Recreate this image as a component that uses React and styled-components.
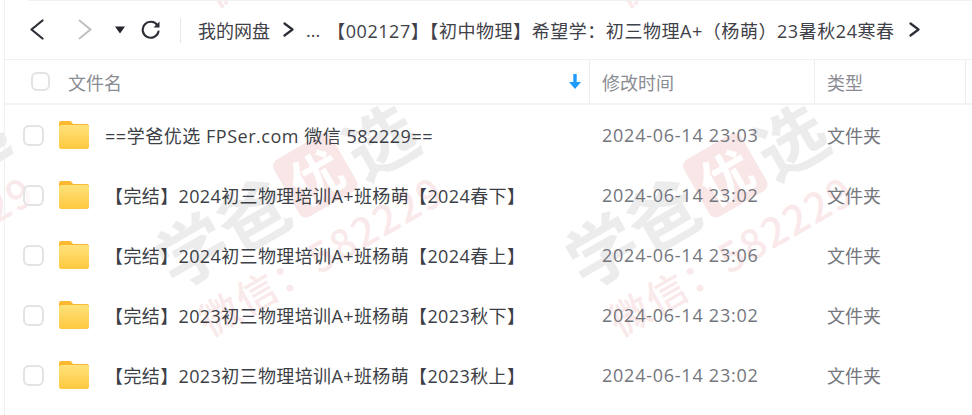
import React from "react";
import styled, { createGlobalStyle } from "styled-components";

const Global = createGlobalStyle`
  html, body { margin: 0; padding: 0; background: #fff; }
  body { font-family: "Open Sans", "Noto Sans CJK SC", sans-serif; overflow: hidden; }
`;
const Page = styled.div`
  position: relative; width: 972px; height: 415px; overflow: hidden; background: #fff;
`;
const Watermarks = styled.div`
  position: absolute; inset: 0; pointer-events: none; font-family: "Noto Sans CJK SC", sans-serif;
`;
const Mark = styled.div`
  position: absolute; width: 340px; height: 134px; margin: -67px 0 0 -170px;
  display: flex; flex-direction: column; align-items: center; justify-content: space-between;
  transform: rotate(-30deg);
`;
const MarkTitle = styled.div`
  display: flex; align-items: center; gap: 6px; height: 78px;
  font-size: 70px; line-height: 78px; font-weight: 700; color: #ececec;
`;
const Stamp = styled.span`
  display: inline-flex; align-items: center; justify-content: center;
  width: 66px; height: 66px; border-radius: 8px; background: #f9e6e7;
  color: #fff; font-size: 52px; line-height: 66px;
`;
const MarkContact = styled.div`
  font-size: 40px; line-height: 48px; height: 48px; font-weight: 500; letter-spacing: 2px;
  color: #fae9ea; white-space: nowrap;
`;
const Frame = styled.div`
  position: relative; height: 100%; margin-left: 4px; border-left: 1px solid #f0f0f0;
`;
const Toolbar = styled.div`
  display: flex; align-items: center; height: 60px; box-sizing: border-box; position: relative;
  border-bottom: 1px solid #f0f0f0; color: #3a3c44; font-size: 18px; white-space: nowrap;
`;
const TopRule = styled.div`
  position: absolute; top: 0; left: 24px; right: 0; height: 1px; background: #f0f0f0;
`;
const IconBtn = styled.span`
  display: flex; align-items: center; justify-content: center; flex: none;
  width: ${p => p.$w}px; margin-left: ${p => p.$ml || 0}px; height: 30px;
`;
const Divider = styled.span`
  flex: none; width: 1px; height: 25px; background: #e6e6e6; margin: 2px 17px 0 19px;
`;
const Crumb = styled.span`
  flex: none; margin-left: ${p => p.$ml || 0}px; color: #3f4148; letter-spacing: ${p => p.$ls || 0}px;
`;
const HeaderRow = styled.div`
  display: grid; grid-template-columns: 558px 225px 151px 1fr; height: 45px; box-sizing: border-box;
  padding-left: 26px; border-bottom: 2px solid #f3f3f3;
  color: #8a8c93; font-size: 18px;
`;
const HeaderName = styled.div`
  display: flex; align-items: center; position: relative;
`;
const HeaderCell = styled.div`
  display: flex; align-items: center; padding-left: 12px; border-left: 1px solid #eeeeee;
`;
const HeaderEnd = styled.div`
  border-left: 1px solid #eeeeee;
`;
const Check = styled.span`
  flex: none; box-sizing: border-box; display: block; width: ${p => p.$s}px; height: ${p => p.$s}px;
  border: 2px solid #e3e3e3; border-radius: 6px; background: rgba(255,255,255,.6);
`;
const HeaderLabel = styled.span`
  margin-left: 18px;
`;
const SortIcon = styled.span`
  display: flex; margin-left: auto; margin-right: 8px;
`;
const Row = styled.div`
  display: grid; grid-template-columns: 36px 46px 497px 225px 1fr; align-items: center; height: 60px;
  padding-left: 18px; font-size: 18px;
`;
const Name = styled.span`
  color: #3d3f46; white-space: nowrap; letter-spacing: ${p => p.$ls}px;
`;
const DateText = styled.span`
  color: #74767d; white-space: nowrap; letter-spacing: .75px;
`;
const TypeText = styled.span`
  color: #74767d;
`;

const Folder = () => (
  <svg width="30" height="28" viewBox="0 0 30 28">
    <defs>
      <linearGradient id="fg" x1="0" y1="0" x2="0" y2="1">
        <stop offset="0" stopColor="#ffe27a" />
        <stop offset="1" stopColor="#ffc840" />
      </linearGradient>
    </defs>
    <path d="M2 0h8c1.500 0 2.300.6 3.200 1.800L14 3h13.500A2.500 2.500 0 0 1 30 5.500V10H0V2a2 2 0 0 1 2-2z" fill="#fdb830" />
    <rect x="0" y="4" width="30" height="24" rx="2.500" fill="url(#fg)" />
  </svg>
);
const Chevron = ({ dir = "right", color = "#2b2e36", w = 14, h = 21, sw = 2.200 }) => (
  <svg width={w} height={h} viewBox={`0 0 ${w} ${h}`} fill="none" stroke={color} strokeWidth={sw} strokeLinecap="round" strokeLinejoin="round">
    {dir === "left"
      ? <path d={`M${w - 1.500} 1.500 L1.500 ${h / 2} L${w - 1.500} ${h - 1.500}`} />
      : <path d={`M1.500 1.500 L${w - 1.500} ${h / 2} L1.500 ${h - 1.500}`} />}
  </svg>
);
const Caret = () => (
  <svg width="10" height="8" viewBox="0 0 10 8"><path d="M0 .5h10L5 7.500z" fill="#24262d" /></svg>
);
const Refresh = () => (
  <svg width="20" height="20" viewBox="0 0 20 20" fill="none">
    <path d="M16.300 5.200A8 8 0 1 0 17.500 11.500" stroke="#2b2e36" strokeWidth="2.100" strokeLinecap="round" />
    <path d="M18.500 1.500v6h-6z" fill="#2b2e36" />
  </svg>
);
const SortArrow = () => (
  <svg width="12" height="15" viewBox="0 0 12 15"><path d="M4.300 0h3.400v8H12l-6 7-6-7h4.300z" fill="#1f9bfb" /></svg>
);

const rows = [
  ["==学爸优选 FPSer.com 微信 582229==", "2024-06-14 23:03", 0.53],
  ["【完结】2024初三物理培训A+班杨萌【2024春下】", "2024-06-14 23:02", 0.38],
  ["【完结】2024初三物理培训A+班杨萌【2024春上】", "2024-06-14 23:06", 0.38],
  ["【完结】2023初三物理培训A+班杨萌【2023秋下】", "2024-06-14 23:02", 0.38],
  ["【完结】2023初三物理培训A+班杨萌【2023秋上】", "2024-06-14 23:02", 0.38],
];
const marks = [
  [-111, 217], [299, 217], [709, 217],
  [304, -112], [714, -112],
  [304, 535], [714, 535],
];

export default function App() {
  return (
    <Page>
      <Global />
      <Watermarks>
        {marks.map(([x, y]) => (
          <Mark key={`${x}-${y}`} style={{ left: x, top: y }}>
            <MarkTitle>学爸<Stamp>优</Stamp>选</MarkTitle>
            <MarkContact>微信：582229</MarkContact>
          </Mark>
        ))}
      </Watermarks>
      <Frame>
        <TopRule />
        <Toolbar>
          <IconBtn $w={14} $ml={25}><Chevron dir="left" /></IconBtn>
          <IconBtn $w={14} $ml={34}><Chevron color="#bdbdbd" sw={1.800} /></IconBtn>
          <IconBtn $w={10} $ml={23}><Caret /></IconBtn>
          <IconBtn $w={20} $ml={16}><Refresh /></IconBtn>
          <Divider />
          <Crumb>我的网盘</Crumb>
          <IconBtn $w={11} $ml={13}><Chevron w={11} h={15} /></IconBtn>
          <Crumb $ml={12}>...</Crumb>
          <Crumb $ml={7} $ls={0.55}>【002127】【初中物理】希望学：初三物理A+（杨萌）23暑秋24寒春</Crumb>
          <IconBtn $w={11} $ml={14}><Chevron w={11} h={15} /></IconBtn>
        </Toolbar>
        <HeaderRow>
          <HeaderName>
            <Check $s={19} />
            <HeaderLabel>文件名</HeaderLabel>
            <SortIcon><SortArrow /></SortIcon>
          </HeaderName>
          <HeaderCell>修改时间</HeaderCell>
          <HeaderCell>类型</HeaderCell>
          <HeaderEnd />
        </HeaderRow>
        {rows.map(([name, date, ls], i) => (
          <Row key={i}>
            <Check $s={21} />
            <Folder />
            <Name $ls={ls}>{name}</Name>
            <DateText>{date}</DateText>
            <TypeText>文件夹</TypeText>
          </Row>
        ))}
      </Frame>
    </Page>
  );
}
